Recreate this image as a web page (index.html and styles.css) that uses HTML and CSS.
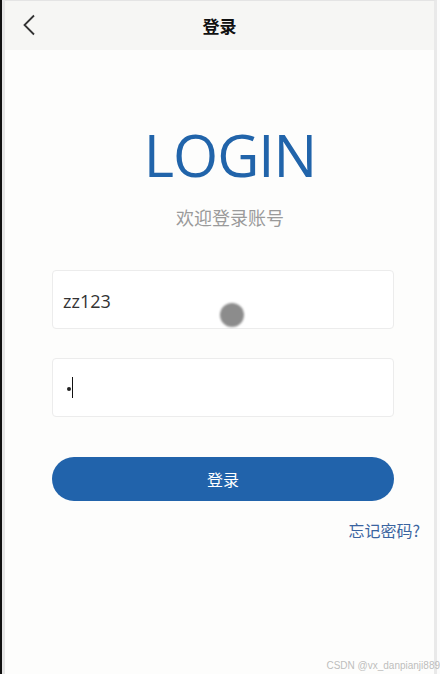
FILE: index.html
```html
<!DOCTYPE html>
<html lang="zh">
<head>
<meta charset="utf-8">
<title>登录</title>
<link rel="stylesheet" href="styles.css">
</head>
<body>
<div class="edge"></div>
<div class="phone">
  <header class="topbar">
    <span class="back">
      <svg width="14" height="22" viewBox="0 0 14 22"><path d="M12 1.5 L2.5 11 L12 20.5" fill="none" stroke="#333" stroke-width="1.8"/></svg>
    </span>
    <h1 class="title">登录</h1>
  </header>
  <main class="content">
    <div class="brand">
      <div class="logo">LOGIN</div>
      <div class="welcome">欢迎登录账号</div>
    </div>
    <form class="form">
      <div class="field"><span class="value">zz123</span></div>
      <div class="field"><span class="dot"></span><span class="caret"></span></div>
      <button type="button" class="submit">登录</button>
      <div class="forgot">忘记密码?</div>
    </form>
    <div class="touch"></div>
    <div class="mark">CSDN @vx_danpianji889</div>
  </main>
</div>
<div class="gap"></div>
</body>
</html>
```
FILE: styles.css
```css
html, body {
  margin: 0;
  padding: 0;
}
body {
  width: 440px;
  height: 674px;
  display: flex;
  background: #fdfdfc;
  font-family: "Noto Sans", "Noto Sans CJK SC", sans-serif;
  overflow: hidden;
}
.edge {
  width: 2px;
  background: #111;
  flex: none;
}
.phone {
  width: 429px;
  flex: none;
  border-left: 3px solid #e6e6e6;
  border-right: 3px solid #e9e9e9;
  border-top: 1px solid #e4e4e4;
  display: flex;
  flex-direction: column;
  background: #fdfdfc;
}
.gap {
  flex: 1;
  background: #fcfcfc;
}
.topbar {
  height: 49px;
  background: #f6f6f4;
  display: flex;
  align-items: center;
  justify-content: center;
  position: relative;
}
.back {
  position: absolute;
  left: 17px;
  top: 13px;
  display: flex;
}
.title {
  margin: 0;
  font-size: 17px;
  font-weight: 700;
  color: #111;
  font-family: "Noto Sans CJK SC", sans-serif;
}
.content {
  flex: 1;
  position: relative;
  padding: 0 40px 0 47px;
}
.brand {
  display: flex;
  flex-direction: column;
  align-items: center;
  padding: 76px 0 0 14px;
  width: 342px;
  box-sizing: border-box;
}
.logo {
  font-family: "Open Sans", sans-serif;
  font-size: 58px;
  line-height: 58px;
  color: #2164aa;
  letter-spacing: -1px;
}
.welcome {
  font-family: "Noto Sans CJK SC", sans-serif;
  font-size: 18px;
  line-height: 26px;
  color: #9a9a9a;
  margin-top: 20px;
}
.form {
  width: 342px;
  display: flex;
  flex-direction: column;
  margin-top: 40px;
}
.field {
  height: 57px;
  border: 1px solid #ececec;
  border-radius: 4px;
  background: #fff;
  display: flex;
  align-items: center;
  padding: 0 10px;
  margin-bottom: 29px;
}
.value {
  font-family: "Open Sans", sans-serif;
  font-size: 18px;
  color: #333;
  margin-top: 3px;
}
.dot {
  width: 4px;
  height: 4px;
  border-radius: 50%;
  background: #222;
  margin-left: 4px;
  margin-top: 2px;
}
.caret {
  width: 1px;
  height: 21px;
  background: #111;
  margin-left: 1px;
}
.submit {
  margin-top: 11px;
  height: 44px;
  border: none;
  border-radius: 22px;
  background: #2163ab;
  color: #fff;
  font-family: "Noto Sans CJK SC", sans-serif;
  font-size: 16px;
  cursor: pointer;
}
.forgot {
  align-self: flex-end;
  margin-right: -26px;
  margin-top: 17px;
  font-family: "Noto Sans CJK SC", sans-serif;
  font-size: 16px;
  color: #3a64a0;
}
.touch {
  position: absolute;
  left: 215px;
  top: 253px;
  width: 24px;
  height: 24px;
  border-radius: 50%;
  background: #8c8c8c;
  filter: blur(0.8px);
}
.mark {
  position: absolute;
  right: -6px;
  bottom: 3px;
  font-family: "Liberation Sans", sans-serif;
  font-size: 10px;
  color: #bdbdbd;
}
```
